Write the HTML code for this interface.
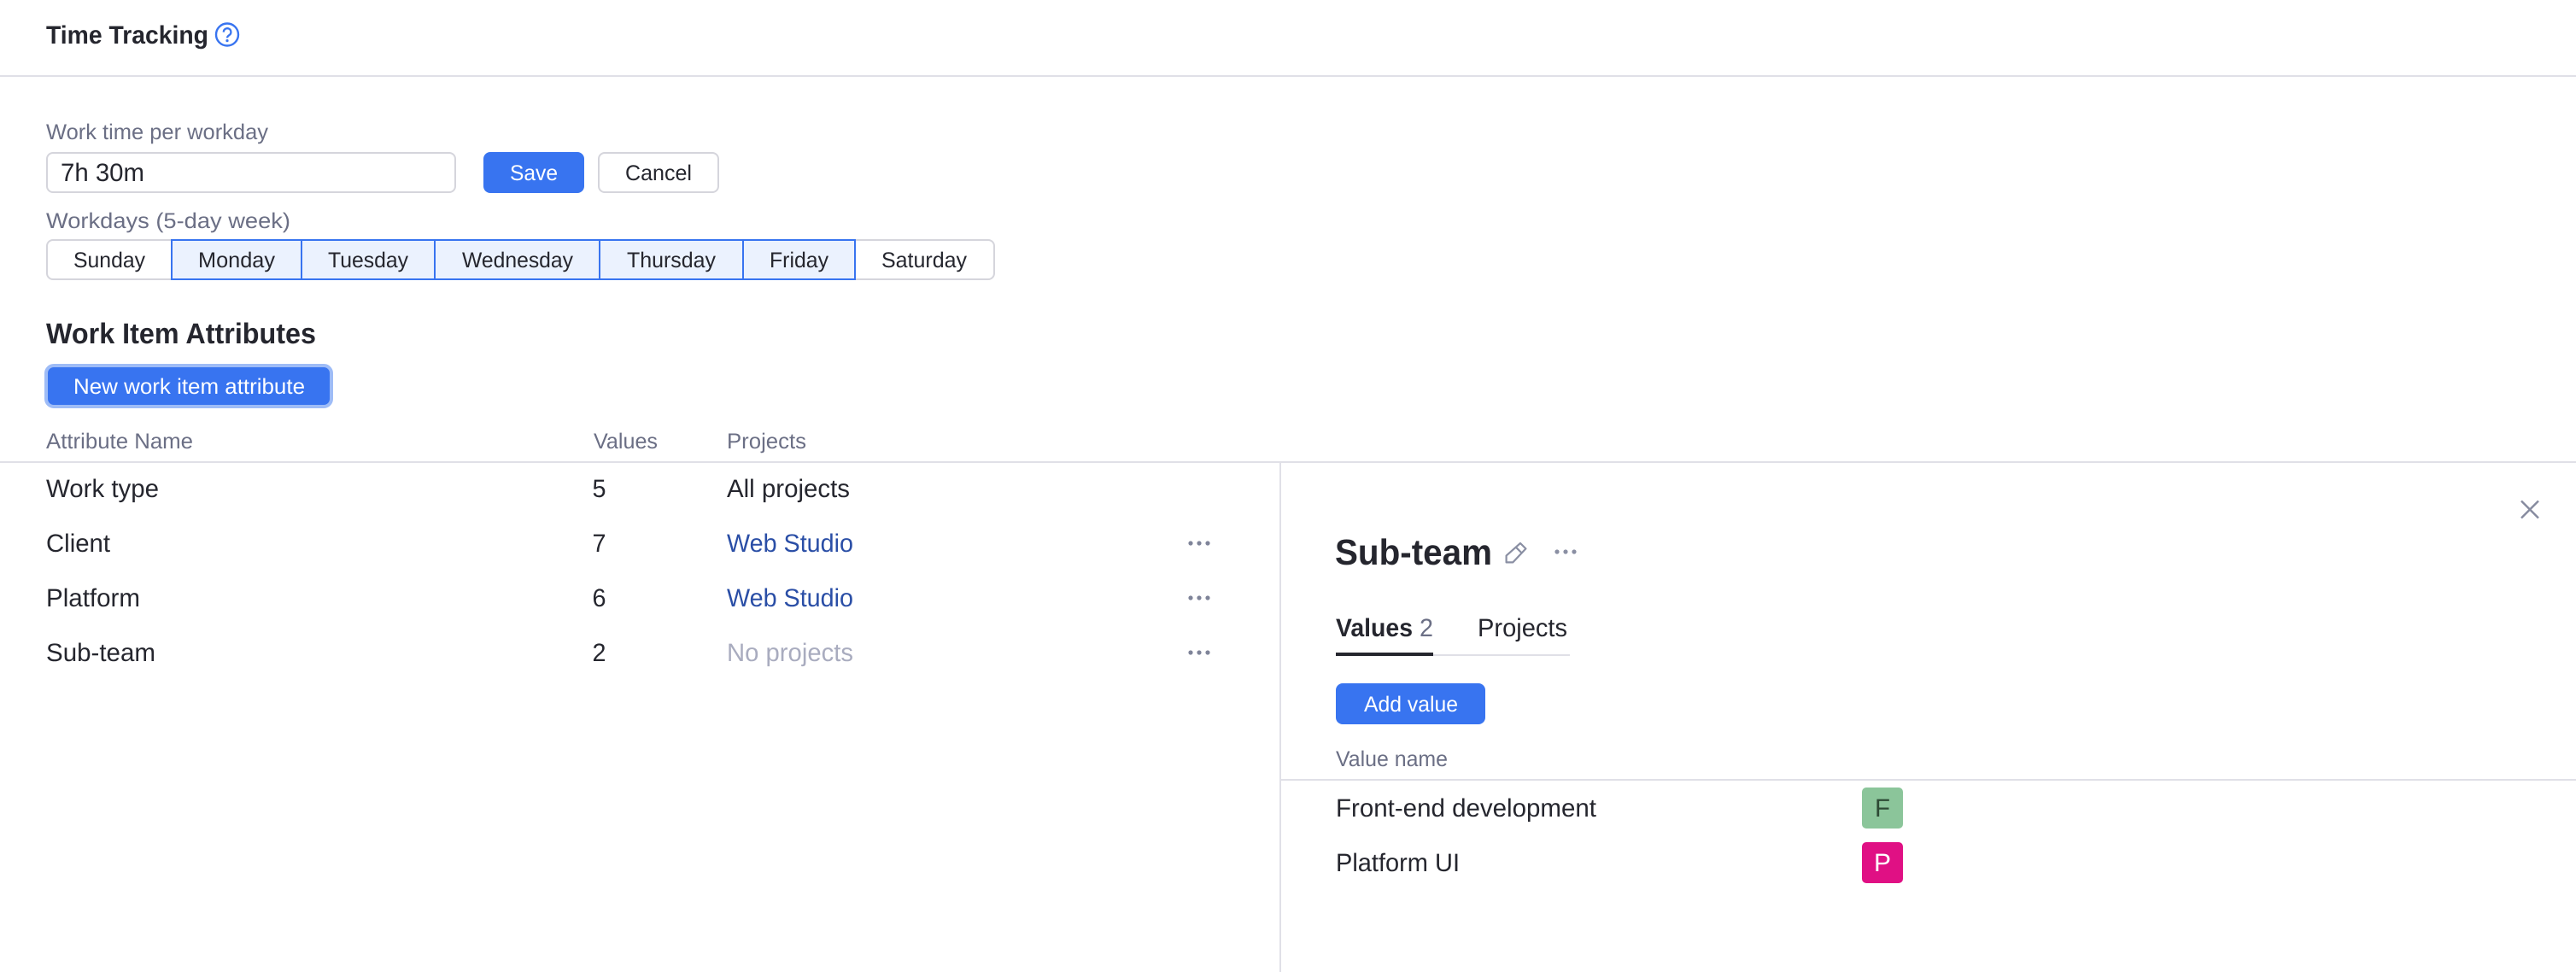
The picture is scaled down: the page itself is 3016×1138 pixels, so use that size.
<!DOCTYPE html>
<html lang="en">
<head>
<meta charset="utf-8">
<title>Time Tracking</title>
<style>
html,body{margin:0;padding:0;background:#fff;width:3016px;height:1138px;overflow:hidden}
svg{display:block}
text{font-family:"Liberation Sans",sans-serif;font-size:25.4px;fill:#25262e}
.l{fill:#6b6f85}
.r{font-size:29.6px}
.b{font-weight:700}
.w{fill:#fff}
.a{fill:#2a4ea6}
.n{fill:#a9acbf}
</style>
</head>
<body>
<svg width="3016" height="1138" viewBox="0 0 3016 1138" xmlns="http://www.w3.org/2000/svg" text-rendering="geometricPrecision">
<rect width="3016" height="1138" fill="#fff"/>

<!-- header -->
<text class="r b" x="54" y="51" textLength="190" lengthAdjust="spacingAndGlyphs">Time Tracking</text>
<circle cx="266" cy="40.5" r="13" fill="none" stroke="#3874f0" stroke-width="2.4"/>
<path d="M261.8 37.6a4.3 4.3 0 1 1 6.8 3.4c-1.7 1.1-2.6 1.9-2.6 3.4" fill="none" stroke="#3874f0" stroke-width="2.3"/>
<circle cx="266" cy="47.6" r="1.6" fill="#3874f0"/>
<rect x="0" y="88" width="3016" height="2" fill="#e0e0e7"/>

<!-- work time -->
<text class="l" x="54" y="163" textLength="260" lengthAdjust="spacingAndGlyphs">Work time per workday</text>
<rect x="55" y="179" width="478" height="46" rx="7" fill="#fff" stroke="#d5d5dc" stroke-width="2"/>
<text class="r" x="71" y="212" textLength="98" lengthAdjust="spacingAndGlyphs">7h 30m</text>
<rect x="566" y="178" width="118" height="48" rx="8" fill="#3874f0"/>
<text class="w" x="597" y="211" textLength="56" lengthAdjust="spacingAndGlyphs">Save</text>
<rect x="701" y="179" width="140" height="46" rx="7" fill="#fff" stroke="#d5d5dc" stroke-width="2"/>
<text x="732" y="211" textLength="78" lengthAdjust="spacingAndGlyphs">Cancel</text>

<!-- workdays -->
<text class="l" x="54" y="267" textLength="286" lengthAdjust="spacingAndGlyphs">Workdays (5-day week)</text>
<rect x="55" y="281" width="1109" height="46" rx="7" fill="#fff" stroke="#d5d5dc" stroke-width="2"/>
<rect x="201" y="281" width="800" height="46" fill="#ebf2fe" stroke="#3874f0" stroke-width="2"/>
<rect x="352" y="280" width="2" height="48" fill="#3874f0"/>
<rect x="508" y="280" width="2" height="48" fill="#3874f0"/>
<rect x="701" y="280" width="2" height="48" fill="#3874f0"/>
<rect x="869" y="280" width="2" height="48" fill="#3874f0"/>
<text x="86" y="313" textLength="84" lengthAdjust="spacingAndGlyphs">Sunday</text>
<text x="232" y="313" textLength="90" lengthAdjust="spacingAndGlyphs">Monday</text>
<text x="384" y="313" textLength="94" lengthAdjust="spacingAndGlyphs">Tuesday</text>
<text x="541" y="313" textLength="130" lengthAdjust="spacingAndGlyphs">Wednesday</text>
<text x="734" y="313" textLength="104" lengthAdjust="spacingAndGlyphs">Thursday</text>
<text x="901" y="313" textLength="69" lengthAdjust="spacingAndGlyphs">Friday</text>
<text x="1032" y="313" textLength="100" lengthAdjust="spacingAndGlyphs">Saturday</text>

<!-- attributes -->
<text class="b" style="font-size:33.8px" x="54" y="402" textLength="316" lengthAdjust="spacingAndGlyphs">Work Item Attributes</text>
<rect x="54" y="428" width="334" height="48" rx="9" fill="#3874f0" stroke="#9ebcf7" stroke-width="4"/>
<text class="w" x="86" y="461" textLength="271" lengthAdjust="spacingAndGlyphs">New work item attribute</text>

<text class="l" x="54" y="525" textLength="172" lengthAdjust="spacingAndGlyphs">Attribute Name</text>
<text class="l" x="695" y="525" textLength="75" lengthAdjust="spacingAndGlyphs">Values</text>
<text class="l" x="851" y="525" textLength="93" lengthAdjust="spacingAndGlyphs">Projects</text>
<rect x="0" y="540" width="3016" height="2" fill="#e0e0e7"/>
<rect x="1498" y="542" width="2" height="596" fill="#e0e0e7"/>

<text class="r" x="54" y="582" textLength="132" lengthAdjust="spacingAndGlyphs">Work type</text>
<text class="r" x="693.5" y="582" textLength="16" lengthAdjust="spacingAndGlyphs">5</text>
<text class="r" x="851" y="582" textLength="144" lengthAdjust="spacingAndGlyphs">All projects</text>

<text class="r" x="54" y="646" textLength="75" lengthAdjust="spacingAndGlyphs">Client</text>
<text class="r" x="693.5" y="646" textLength="16" lengthAdjust="spacingAndGlyphs">7</text>
<text class="r a" x="851" y="646" textLength="148" lengthAdjust="spacingAndGlyphs">Web Studio</text>
<g fill="#7f8499"><circle cx="1394" cy="636" r="2.6"/><circle cx="1404" cy="636" r="2.6"/><circle cx="1414" cy="636" r="2.6"/></g>

<text class="r" x="54" y="710" textLength="110" lengthAdjust="spacingAndGlyphs">Platform</text>
<text class="r" x="693.5" y="710" textLength="16" lengthAdjust="spacingAndGlyphs">6</text>
<text class="r a" x="851" y="710" textLength="148" lengthAdjust="spacingAndGlyphs">Web Studio</text>
<g fill="#7f8499"><circle cx="1394" cy="700" r="2.6"/><circle cx="1404" cy="700" r="2.6"/><circle cx="1414" cy="700" r="2.6"/></g>

<text class="r" x="54" y="774" textLength="128" lengthAdjust="spacingAndGlyphs">Sub-team</text>
<text class="r" x="693.5" y="774" textLength="16" lengthAdjust="spacingAndGlyphs">2</text>
<text class="r n" x="851" y="774" textLength="148" lengthAdjust="spacingAndGlyphs">No projects</text>
<g fill="#7f8499"><circle cx="1394" cy="764" r="2.6"/><circle cx="1404" cy="764" r="2.6"/><circle cx="1414" cy="764" r="2.6"/></g>

<!-- side panel -->
<path d="M2952 586.5L2972 606.5M2972 586.5L2952 606.5" stroke="#868b9f" stroke-width="2.4" fill="none"/>
<text class="b" style="font-size:42.3px" x="1563" y="661" textLength="184" lengthAdjust="spacingAndGlyphs">Sub-team</text>
<path d="M1780 636L1786.4 642.4L1771.3 658.4H1763.6V650.6ZM1775 640.8L1781.6 647.4" fill="none" stroke="#8a8fa3" stroke-width="2.2" stroke-linejoin="round"/>
<g fill="#8a8fa3"><circle cx="1823" cy="646" r="2.6"/><circle cx="1833" cy="646" r="2.6"/><circle cx="1843" cy="646" r="2.6"/></g>

<text class="r b" x="1564" y="745" textLength="90" lengthAdjust="spacingAndGlyphs">Values</text>
<text class="r l" x="1662" y="745" textLength="16" lengthAdjust="spacingAndGlyphs">2</text>
<text class="r" x="1730" y="745" textLength="105" lengthAdjust="spacingAndGlyphs">Projects</text>
<rect x="1564" y="766" width="274" height="2" fill="#e0e0e7"/>
<rect x="1564" y="764" width="114" height="4" fill="#25262e"/>

<rect x="1564" y="800" width="175" height="48" rx="8" fill="#3874f0"/>
<text class="w" x="1597" y="833" textLength="110" lengthAdjust="spacingAndGlyphs">Add value</text>
<text class="l" x="1564" y="897" textLength="131" lengthAdjust="spacingAndGlyphs">Value name</text>
<rect x="1500" y="912" width="1516" height="2" fill="#e0e0e7"/>

<text class="r" x="1564" y="956" textLength="305" lengthAdjust="spacingAndGlyphs">Front-end development</text>
<rect x="2180" y="922" width="48" height="48" rx="5" fill="#8bc59a"/>
<text class="r" style="fill:#2d4a35" x="2195" y="956" textLength="18" lengthAdjust="spacingAndGlyphs">F</text>

<text class="r" x="1564" y="1020" textLength="145" lengthAdjust="spacingAndGlyphs">Platform UI</text>
<rect x="2180" y="986" width="48" height="48" rx="5" fill="#e01084"/>
<text class="r w" x="2194" y="1020" textLength="20" lengthAdjust="spacingAndGlyphs">P</text>
</svg>
</body>
</html>
